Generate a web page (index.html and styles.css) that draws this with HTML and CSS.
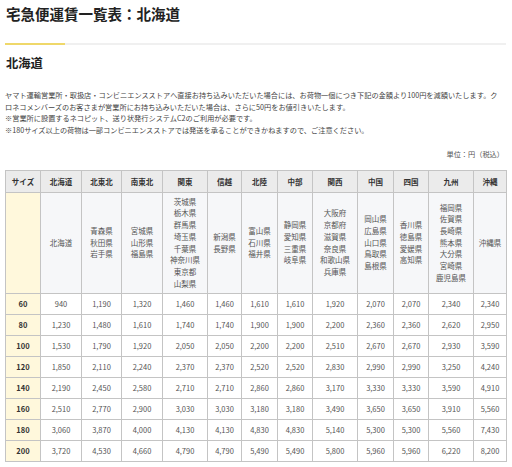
FILE: index.html
```html
<!DOCTYPE html>
<html lang="ja">
<head>
<meta charset="utf-8">
<link rel="stylesheet" href="styles.css">
</head>
<body>
<div class="page">
  <h1 class="title">宅急便運賃一覧表：北海道</h1>
  <div class="rule"></div>
  <h2 class="subtitle">北海道</h2>
  <div class="notes">
    <p>ヤマト運輸営業所・取扱店・コンビニエンスストアへ直接お持ち込みいただいた場合には、お荷物一個につき下記の金額より100円を減額いたします。ク<br>ロネコメンバーズのお客さまが営業所にお持ち込みいただいた場合は、さらに50円をお値引きいたします。</p>
    <p>※営業所に設置するネコピット、送り状発行システムC2のご利用が必要です。</p>
    <p>※180サイズ以上の荷物は一部コンビニエンスストアでは発送を承ることができかねますので、ご注意ください。</p>
  </div>
  <p class="unit">単位：円（税込）</p>
  <table class="fare">
    <colgroup>
      <col class="c35"><col class="c41"><col class="c40"><col class="c41"><col class="c45"><col class="c34"><col class="c36"><col class="c35"><col class="c45"><col class="c36"><col class="c35"><col class="c45"><col class="c33">
    </colgroup>
    <thead>
      <tr>
        <th>サイズ</th><th>北海道</th><th>北東北</th><th>南東北</th><th>関東</th><th>信越</th><th>北陸</th><th>中部</th><th>関西</th><th>中国</th><th>四国</th><th>九州</th><th>沖縄</th>
      </tr>
    </thead>
    <tbody>
      <tr class="pref">
        <td class="size"></td>
        <td>北海道</td>
        <td>青森県<br>秋田県<br>岩手県</td>
        <td>宮城県<br>山形県<br>福島県</td>
        <td>茨城県<br>栃木県<br>群馬県<br>埼玉県<br>千葉県<br>神奈川県<br>東京都<br>山梨県</td>
        <td>新潟県<br>長野県</td>
        <td>富山県<br>石川県<br>福井県</td>
        <td>静岡県<br>愛知県<br>三重県<br>岐阜県</td>
        <td>大阪府<br>京都府<br>滋賀県<br>奈良県<br>和歌山県<br>兵庫県</td>
        <td>岡山県<br>広島県<br>山口県<br>鳥取県<br>島根県</td>
        <td>香川県<br>徳島県<br>愛媛県<br>高知県</td>
        <td>福岡県<br>佐賀県<br>長崎県<br>熊本県<br>大分県<br>宮崎県<br>鹿児島県</td>
        <td>沖縄県</td>
      </tr>
      <tr><td class="size">60</td><td>940</td><td>1,190</td><td>1,320</td><td>1,460</td><td>1,460</td><td>1,610</td><td>1,610</td><td>1,920</td><td>2,070</td><td>2,070</td><td>2,340</td><td>2,340</td></tr>
      <tr><td class="size">80</td><td>1,230</td><td>1,480</td><td>1,610</td><td>1,740</td><td>1,740</td><td>1,900</td><td>1,900</td><td>2,200</td><td>2,360</td><td>2,360</td><td>2,620</td><td>2,950</td></tr>
      <tr><td class="size">100</td><td>1,530</td><td>1,790</td><td>1,920</td><td>2,050</td><td>2,050</td><td>2,200</td><td>2,200</td><td>2,510</td><td>2,670</td><td>2,670</td><td>2,930</td><td>3,590</td></tr>
      <tr><td class="size">120</td><td>1,850</td><td>2,110</td><td>2,240</td><td>2,370</td><td>2,370</td><td>2,520</td><td>2,520</td><td>2,830</td><td>2,990</td><td>2,990</td><td>3,250</td><td>4,240</td></tr>
      <tr><td class="size">140</td><td>2,190</td><td>2,450</td><td>2,580</td><td>2,710</td><td>2,710</td><td>2,860</td><td>2,860</td><td>3,170</td><td>3,330</td><td>3,330</td><td>3,590</td><td>4,910</td></tr>
      <tr><td class="size">160</td><td>2,510</td><td>2,770</td><td>2,900</td><td>3,030</td><td>3,030</td><td>3,180</td><td>3,180</td><td>3,490</td><td>3,650</td><td>3,650</td><td>3,910</td><td>5,560</td></tr>
      <tr><td class="size">180</td><td>3,060</td><td>3,870</td><td>4,000</td><td>4,130</td><td>4,130</td><td>4,830</td><td>4,830</td><td>5,140</td><td>5,300</td><td>5,300</td><td>5,560</td><td>7,430</td></tr>
      <tr><td class="size">200</td><td>3,720</td><td>4,530</td><td>4,660</td><td>4,790</td><td>4,790</td><td>5,490</td><td>5,490</td><td>5,800</td><td>5,960</td><td>5,960</td><td>6,220</td><td>8,200</td></tr>
    </tbody>
  </table>
</div>
</body>
</html>
```

FILE: styles.css
```css
* { box-sizing: border-box; }
html, body { margin: 0; padding: 0; background: #fff; }
body {
  font-family: "Noto Sans CJK JP", "Noto Sans", sans-serif;
  color: #333;
}
.page {
  width: 512px;
  padding: 0 6px 0 5px;
}
.title {
  margin: 4px 0 0 1px;
  font-size: 14.5px;
  line-height: 20px;
  font-weight: 700;
  color: #222;
}
.rule {
  margin-top: 19px;
  height: 2px;
  background: linear-gradient(to right, #efd86a 0, #efd86a 60px, #f0f0f0 60px);
}
.subtitle {
  margin: 10px 0 0 1px;
  font-size: 12.3px;
  line-height: 16px;
  font-weight: 700;
  color: #222;
}
.notes {
  margin-top: 19px;
  font-size: 7.2px;
  line-height: 11.5px;
  color: #444;
}
.notes p { margin: 0; }
.unit {
  margin: 13px 0 0;
  text-align: right;
  font-size: 7.2px;
  line-height: 11.5px;
  color: #555;
  padding-right: 2px;
}
.fare {
  margin-top: 9px;
  width: 501px;
  table-layout: fixed;
  border-collapse: collapse;
  font-size: 7.5px;
  color: #555;
}
.c35 { width: 35px; } .c41 { width: 41px; } .c40 { width: 40px; }
.c45 { width: 45px; } .c34 { width: 34px; } .c36 { width: 36px; } .c33 { width: 33px; }
.fare th, .fare td {
  border: 1px solid #c4c4c4;
  text-align: center;
  vertical-align: middle;
  padding: 0;
}
.fare th {
  height: 22px;
  background: #ebebeb;
  color: #333;
  font-weight: 700;
}
.fare td { height: 21px; background: #fff; }
.fare .pref td {
  height: 101px;
  background: #f6f7f9;
  line-height: 11.7px;
}
.fare td.size,
.fare .pref td.size {
  background: #fff8dc;
  color: #333;
  font-weight: 700;
}
```
